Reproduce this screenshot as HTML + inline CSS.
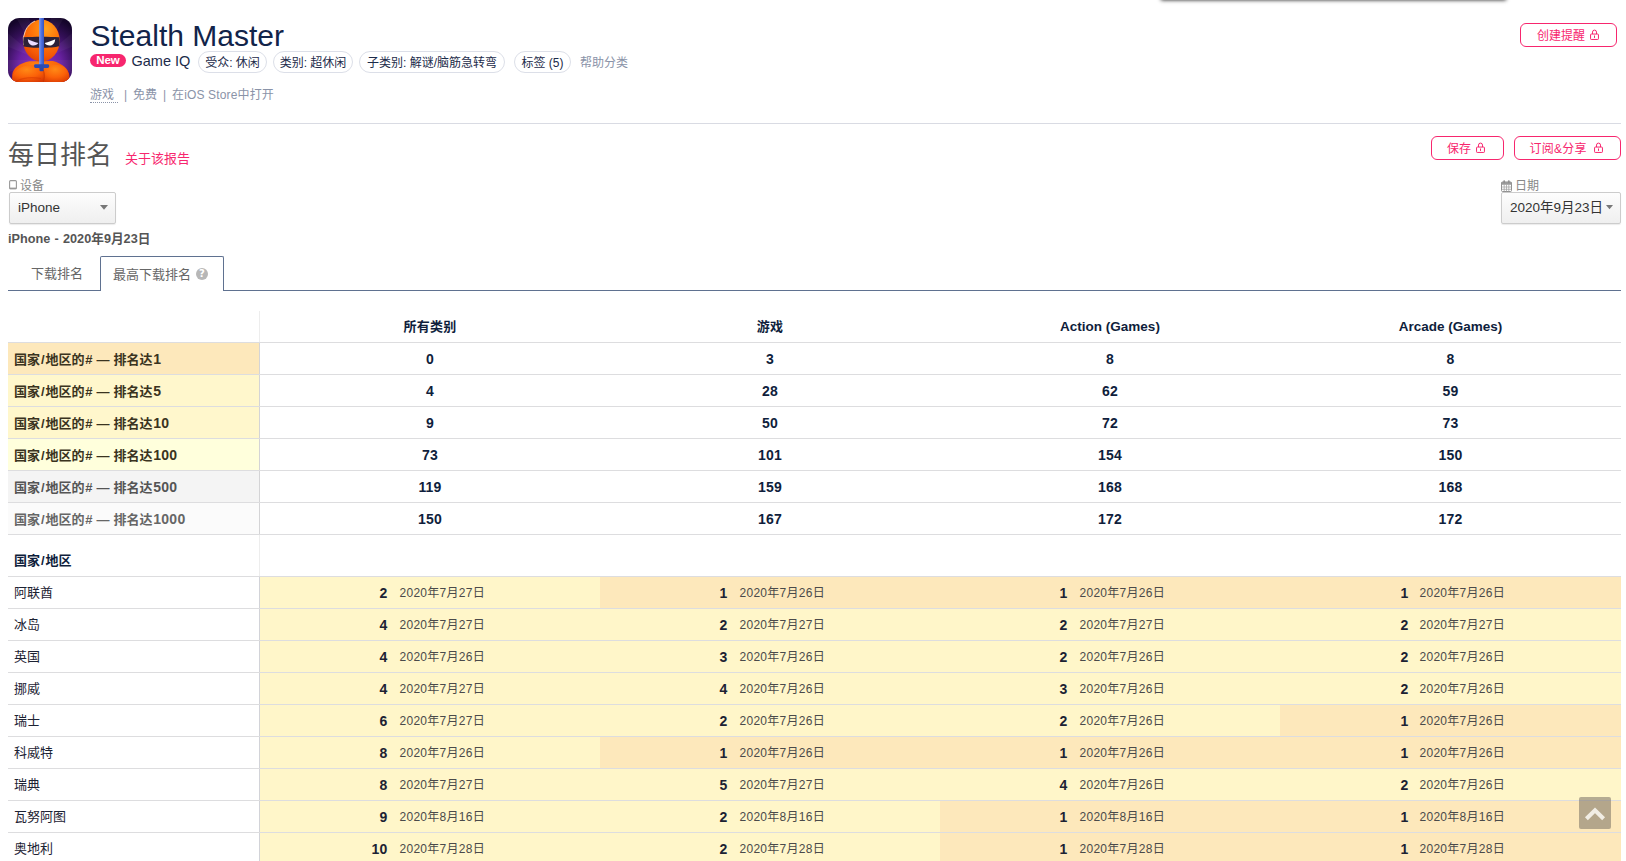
<!DOCTYPE html>
<html lang="zh-CN">
<head>
<meta charset="utf-8">
<title>Stealth Master - 每日排名</title>
<style>
*{box-sizing:border-box;margin:0;padding:0}
html,body{width:1626px;height:861px;overflow:hidden;background:#fff}
body{font-family:"Liberation Sans","Noto Sans CJK SC",sans-serif;font-size:12px;color:#0f1e3c;position:relative}
.abs{position:absolute;white-space:nowrap}
a{text-decoration:none;color:inherit}
/* header */
#topshadow{left:1160.5px;top:-20px;width:345px;height:20px;background:#fff;box-shadow:0 0 4px rgba(0,0,0,.9)}
#appicon{left:8px;top:18px;width:64px;height:64px}
#title{left:90.5px;top:15.5px;font-size:30px;line-height:40px;color:#12244a}
#newbadge{left:90px;top:54px;width:36px;height:13px;border-radius:7px;background:#f7266e;color:#fff;font-size:11.5px;line-height:13px;text-align:center;font-weight:bold}
#gameiq{left:131.5px;top:52px;font-size:14.5px;line-height:18px;color:#1c2b4a}
.pill{height:22px;top:51px;border:1px solid #dcdfe8;border-radius:11px;font-size:12px;line-height:22px;padding:0;text-align:center;color:#1c2b4a;background:#fff}
#helpcat{left:580px;top:52.5px;font-size:12px;line-height:20px;color:#8a93a8}
#sub{left:90px;top:85px;font-size:12px;line-height:20px;color:#8a93a8}
#sub span{position:absolute;top:0}
#sub .dot{border-bottom:1px dotted #8a93a8;height:18px}
.hr{left:8px;width:1613px;height:1px;top:123px;background:#d9dbe3}
.pbtn{height:24px;border:1px solid #f7266e;border-radius:6px;color:#f7266e;font-size:12px;line-height:22px;background:#fff}
.pbtn span{position:absolute;top:1px}
.pbtn svg{position:absolute;top:5px}
/* section */
#h2{left:8px;top:136px;font-size:26px;line-height:38px;color:#555}
#about{left:125px;top:150px;font-size:13px;line-height:18px;color:#f7266e}
.lbl{font-size:12px;line-height:14px;color:#888}
.sel{height:32px;border:1px solid #ccc;border-radius:2px;background:linear-gradient(#fdfdfd,#efefef);font-size:13.5px;line-height:30px;color:#333;box-shadow:0 1px 1px rgba(0,0,0,.08)}
.caret{position:absolute}
#devdate{left:8px;top:231px;font-size:12.7px;line-height:16px;font-weight:bold;color:#555;word-spacing:.7px}
#tabline{left:8px;top:290px;width:1613px;height:1px;background:#5f7190}
#tab1{left:31px;top:265px;font-size:13px;line-height:18px;color:#666}
#tab2{left:100px;top:256px;width:124px;height:35px;border:1px solid #5f7190;border-bottom:0;border-radius:2px 2px 0 0;background:#fff;font-size:13px;line-height:18px;color:#666;padding:8.5px 0 0 12px}
#qm{position:absolute;left:95px;top:11px;width:12px;height:12px;border-radius:6px;background:#b7b7b7;color:#fff;font-family:"DejaVu Sans","Liberation Sans",sans-serif;font-size:10px;line-height:12.5px;font-weight:bold;text-align:center}
/* table */
#tbl{left:8px;top:311px;width:1613px;font-size:13px}
.r{position:absolute;left:0;width:1613px;height:32px;border-top:1px solid #dddddf}
.r>div{position:absolute;top:0;height:31px;line-height:31px}
.c0{left:0;width:251px;padding-left:6px}
.c1{left:252px;width:340px}.c2{left:592px;width:340px}.c3{left:932px;width:340px}.c4{left:1272px;width:341px}
.vline{position:absolute;left:251px;width:1px}
.hd>div{line-height:32px;font-weight:bold;text-align:center;color:#0f1e3c;letter-spacing:.28px}.hd .lt{font-size:13.5px;letter-spacing:0}
.sm>div{line-height:32px;font-weight:bold;text-align:center;color:#0f1e3c;font-size:14px;letter-spacing:.2px}
.sm .c0{text-align:left;color:#3a3320;letter-spacing:0;padding-left:6px;font-size:13px}
.s1{background:#fde8bb}.s2{background:#fff7cc}.s3{background:#ffffdc}.s4{background:#f4f4f4}.s5{background:#fbfbfb}
.sm .s4{color:#555}.sm .s5{color:#666}
.ct .c0{color:#1c2233}
i{font-style:normal}.sl{margin:0 .9px 0 1px}.hs{margin:0 .5px 0 .6px}.ds{margin-right:.5px}.dg{font-size:14px;letter-spacing:.3px;margin-left:.5px}
.ct .n{position:absolute;right:212.5px;top:.6px;font-weight:bold;color:#1c2233;font-size:14px;letter-spacing:.2px}
.ct .d{position:absolute;left:139.5px;top:1px;color:#4a4a4a;font-size:12px;letter-spacing:.28px}
.y{background:#fff6c9}.o{background:#fde8bb}
#totop{left:1579px;top:797px;width:32px;height:32px;background:rgba(120,112,100,.55);border-radius:2px}
</style>
</head>
<body>
<div class="abs" id="topshadow"></div>
<svg class="abs" id="appicon" viewBox="0 0 64 64" width="64" height="64">
<defs>
<radialGradient id="bgG" cx="50%" cy="74%" r="78%"><stop offset="0" stop-color="#8e2fc0"/><stop offset=".42" stop-color="#6a21a3"/><stop offset=".72" stop-color="#351059"/><stop offset="1" stop-color="#14052a"/></radialGradient>
<radialGradient id="hdG" cx="62%" cy="22%" r="85%"><stop offset="0" stop-color="#ffa21f"/><stop offset=".35" stop-color="#ff7d0c"/><stop offset=".75" stop-color="#f65a05"/><stop offset="1" stop-color="#dd4003"/></radialGradient>
<radialGradient id="bdG" cx="45%" cy="20%" r="90%"><stop offset="0" stop-color="#ff8412"/><stop offset=".55" stop-color="#f95a06"/><stop offset="1" stop-color="#d53603"/></radialGradient>
<radialGradient id="armL" cx="45%" cy="25%" r="80%"><stop offset="0" stop-color="#ff8a16"/><stop offset=".55" stop-color="#fb6108"/><stop offset="1" stop-color="#d83803"/></radialGradient>
<linearGradient id="swG" x1="0" x2="1"><stop offset="0" stop-color="#7c9bf5"/><stop offset=".45" stop-color="#4f72e0"/><stop offset="1" stop-color="#3654bd"/></linearGradient>
<clipPath id="icClip"><rect width="64" height="64" rx="11.5" ry="11.5"/></clipPath>
</defs>
<g clip-path="url(#icClip)">
<rect width="64" height="64" fill="url(#bgG)"/>
<path d="M32 42 L-4 12 L-4 27 Z M32 42 L68 12 L68 27 Z M32 42 L6 -4 L20 -4 Z M32 42 L58 -4 L44 -4 Z M32 42 L-4 42 L-4 56 Z M32 42 L68 42 L68 56 Z" fill="#fff" opacity=".045"/>
<path d="M21.5 43.2 C12 45 4.6 50 4.2 57 L4.2 65 L61.4 65 L61.4 58 C61 51 54 45.5 45 43 Z" fill="url(#bdG)"/>
<ellipse cx="33.4" cy="22.6" rx="18.3" ry="21" fill="url(#hdG)"/>
<path d="M15.6 27 A18.3 21 0 0 1 27 3" fill="none" stroke="#fff1e0" stroke-width=".8" opacity=".95"/>
<path d="M15.6 19.3 C26 18.6 41 18.6 51.2 19.3 A18.3 21 0 0 1 51.3 28.2 C44 30.2 23 30.2 15.7 28.4 A18.3 21 0 0 1 15.6 19.3 Z" fill="#2d2238"/>
<path d="M19.8 21.2 C22.6 22.4 26.6 24 30.3 25 C29.4 27.2 26 28 23.4 27.2 C21.2 26.4 19.9 24 19.8 21.2 Z" fill="#eadcff"/>
<path d="M47.2 21.2 C44.4 22.4 40.4 24 36.7 25 C37.6 27.2 41 28 43.6 27.2 C45.8 26.4 47.1 24 47.2 21.2 Z" fill="#fff"/>
<path d="M4.6 64 C3.5 56 8 50.5 16 48.2 C24 46 33 47.5 35.2 52 C36.6 56 36 61 34.5 65 Z" fill="url(#armL)"/>
<path d="M35.4 52 C38 47.6 46 45.8 52.5 47.5 C58.5 49.3 62 54.5 61.2 65 L36 65 C37 60.5 37 56 35.4 52 Z" fill="url(#armL)"/>
<path d="M35.3 52 C36.8 56 36.6 61 35 65" fill="none" stroke="#b92c02" stroke-width=".9" opacity=".75"/>
<path d="M8 63.5 C14 60 24 59 33 60.5" fill="none" stroke="#d03402" stroke-width="1.2" opacity=".45"/>
<rect x="31.1" y="-1" width="4.9" height="49" fill="url(#swG)"/>
<rect x="31.5" y="49" width="4.2" height="4.2" rx="1.2" fill="#2c48a8"/>
<rect x="26.1" y="46.2" width="15" height="3.7" rx="1.4" fill="#2b4bb2"/>
</g>
</svg>
<div class="abs" id="title">Stealth Master</div>
<div class="abs" id="newbadge">New</div>
<div class="abs" id="gameiq">Game IQ</div>
<div class="abs pill" style="left:198px;width:69px">受众: 休闲</div>
<div class="abs pill" style="left:273px;width:80px">类别: 超休闲</div>
<div class="abs pill" style="left:359px;width:146px">子类别: 解谜/脑筋急转弯</div>
<div class="abs pill" style="left:514px;width:57px">标签 (5)</div>
<div class="abs" id="helpcat">帮助分类</div>
<div class="abs" id="sub"><span class="dot" style="left:0;width:28px">游戏</span><span style="left:34px">|</span><span style="left:43px">免费</span><span style="left:73px">|</span><span style="left:82px;letter-spacing:.15px">在iOS Store中打开</span></div>
<div class="abs pbtn" style="left:1520px;top:23px;width:97px"><span style="left:16px">创建提醒</span><svg style="left:69px" width="9" height="11" viewBox="0 0 9 11"><rect x=".55" y="5.05" width="7.9" height="5.4" rx=".7" fill="none" stroke="#f7266e" stroke-width="1"/><path d="M2.5 5V3.1a2 2 0 0 1 4 0V5" fill="none" stroke="#f7266e" stroke-width="1"/><rect x="4" y="6.5" width="1" height="2.4" fill="#f7266e"/></svg></div>
<div class="abs hr"></div>

<div class="abs" id="h2">每日排名</div>
<a class="abs" id="about">关于该报告</a>
<div class="abs pbtn" style="left:1431px;top:136px;width:73px"><span style="left:15px">保存</span><svg style="left:44px" width="9" height="11" viewBox="0 0 9 11"><rect x=".55" y="5.05" width="7.9" height="5.4" rx=".7" fill="none" stroke="#f7266e" stroke-width="1"/><path d="M2.5 5V3.1a2 2 0 0 1 4 0V5" fill="none" stroke="#f7266e" stroke-width="1"/><rect x="4" y="6.5" width="1" height="2.4" fill="#f7266e"/></svg></div>
<div class="abs pbtn" style="left:1514px;top:136px;width:107px"><span style="left:14.5px;letter-spacing:.25px">订阅&amp;分享</span><svg style="left:78.5px" width="9" height="11" viewBox="0 0 9 11"><rect x=".55" y="5.05" width="7.9" height="5.4" rx=".7" fill="none" stroke="#f7266e" stroke-width="1"/><path d="M2.5 5V3.1a2 2 0 0 1 4 0V5" fill="none" stroke="#f7266e" stroke-width="1"/><rect x="4" y="6.5" width="1" height="2.4" fill="#f7266e"/></svg></div>
<svg class="abs" style="left:9px;top:180px" width="8" height="10" viewBox="0 0 8 10"><rect x=".6" y=".6" width="6.8" height="8.2" rx="1" fill="none" stroke="#999" stroke-width="1.1"/><rect x=".6" y="7.6" width="6.8" height="1.6" fill="#999"/></svg><div class="abs lbl" style="left:20px;top:178.5px">设备</div>
<div class="abs sel" style="left:9px;top:192px;width:107px;padding-left:8px">iPhone<svg class="caret" style="left:90.4px;top:12.3px" width="8" height="5" viewBox="0 0 8 5"><path d="M0 0H8L4 4.8Z" fill="#777"/></svg></div>
<svg class="abs" style="left:1501px;top:180px" width="11" height="12" viewBox="0 0 11 12"><rect x=".5" y="2" width="10" height="9.5" rx="1" fill="#fff" stroke="#8f8f8f" stroke-width="1"/><path d="M.5 4.5H10.5M.5 7H10.5M.5 9.3H10.5M3.2 4.5V11.5M5.5 4.5V11.5M7.8 4.5V11.5" stroke="#a5a5a5" stroke-width=".8" fill="none"/><rect x=".5" y="2" width="10" height="2.2" fill="#9a9a9a"/><rect x="2.3" y=".3" width="1.8" height="3" rx=".8" fill="#8f8f8f"/><rect x="6.9" y=".3" width="1.8" height="3" rx=".8" fill="#8f8f8f"/></svg><div class="abs lbl" style="left:1515px;top:178.5px">日期</div>
<div class="abs sel" style="left:1501px;top:192px;width:120px;padding-left:8px">2020年9月23日<svg class="caret" style="left:104px;top:12.4px" width="7" height="5" viewBox="0 0 7 5"><path d="M0 0H7L3.5 4.3Z" fill="#777"/></svg></div>
<div class="abs" id="devdate">iPhone - 2020年9月23日</div>
<div class="abs" id="tabline"></div>
<div class="abs" id="tab1">下载排名</div>
<div class="abs" id="tab2">最高下载排名<span id="qm">?</span></div>

<div class="abs" id="tbl">
<div class="vline" style="top:0;height:31px;background:#ededed"></div><div class="vline" style="top:31px;height:192px;background:#d4d4d6"></div><div class="vline" style="top:223px;height:42px;background:#ededed"></div><div class="vline" style="top:265px;height:300px;background:#d2d3d8"></div>
<!--ROWS-->
<div class="r hd" style="top:0;border-top:0"><div class="c1">所有类别</div><div class="c2">游戏</div><div class="c3 lt">Action (Games)</div><div class="c4 lt">Arcade (Games)</div></div>
<div class="r sm" style="top:31px"><div class="c0 s1">国家<i class="sl">/</i>地区的<i class="hs">#</i> <i class="ds">—</i> 排名达<i class="dg">1</i></div><div class="c1">0</div><div class="c2">3</div><div class="c3">8</div><div class="c4">8</div></div>
<div class="r sm" style="top:63px"><div class="c0 s2">国家<i class="sl">/</i>地区的<i class="hs">#</i> <i class="ds">—</i> 排名达<i class="dg">5</i></div><div class="c1">4</div><div class="c2">28</div><div class="c3">62</div><div class="c4">59</div></div>
<div class="r sm" style="top:95px"><div class="c0 s2">国家<i class="sl">/</i>地区的<i class="hs">#</i> <i class="ds">—</i> 排名达<i class="dg">10</i></div><div class="c1">9</div><div class="c2">50</div><div class="c3">72</div><div class="c4">73</div></div>
<div class="r sm" style="top:127px"><div class="c0 s3">国家<i class="sl">/</i>地区的<i class="hs">#</i> <i class="ds">—</i> 排名达<i class="dg">100</i></div><div class="c1">73</div><div class="c2">101</div><div class="c3">154</div><div class="c4">150</div></div>
<div class="r sm" style="top:159px"><div class="c0 s4">国家<i class="sl">/</i>地区的<i class="hs">#</i> <i class="ds">—</i> 排名达<i class="dg">500</i></div><div class="c1">119</div><div class="c2">159</div><div class="c3">168</div><div class="c4">168</div></div>
<div class="r sm" style="top:191px"><div class="c0 s5">国家<i class="sl">/</i>地区的<i class="hs">#</i> <i class="ds">—</i> 排名达<i class="dg">1000</i></div><div class="c1">150</div><div class="c2">167</div><div class="c3">172</div><div class="c4">172</div></div>
<div class="r sm" style="top:223px;height:42px"><div class="c0" style="top:10px;color:#0f1e3c">国家<i class="sl">/</i>地区</div></div>
<div class="r ct" style="top:265px"><div class="c0">阿联酋</div><div class="c1 y"><span class="n">2</span><span class="d">2020年7月27日</span></div><div class="c2 o"><span class="n">1</span><span class="d">2020年7月26日</span></div><div class="c3 o"><span class="n">1</span><span class="d">2020年7月26日</span></div><div class="c4 o"><span class="n">1</span><span class="d">2020年7月26日</span></div></div>
<div class="r ct" style="top:297px"><div class="c0">冰岛</div><div class="c1 y"><span class="n">4</span><span class="d">2020年7月27日</span></div><div class="c2 y"><span class="n">2</span><span class="d">2020年7月27日</span></div><div class="c3 y"><span class="n">2</span><span class="d">2020年7月27日</span></div><div class="c4 y"><span class="n">2</span><span class="d">2020年7月27日</span></div></div>
<div class="r ct" style="top:329px"><div class="c0">英国</div><div class="c1 y"><span class="n">4</span><span class="d">2020年7月26日</span></div><div class="c2 y"><span class="n">3</span><span class="d">2020年7月26日</span></div><div class="c3 y"><span class="n">2</span><span class="d">2020年7月26日</span></div><div class="c4 y"><span class="n">2</span><span class="d">2020年7月26日</span></div></div>
<div class="r ct" style="top:361px"><div class="c0">挪威</div><div class="c1 y"><span class="n">4</span><span class="d">2020年7月27日</span></div><div class="c2 y"><span class="n">4</span><span class="d">2020年7月26日</span></div><div class="c3 y"><span class="n">3</span><span class="d">2020年7月26日</span></div><div class="c4 y"><span class="n">2</span><span class="d">2020年7月26日</span></div></div>
<div class="r ct" style="top:393px"><div class="c0">瑞士</div><div class="c1 y"><span class="n">6</span><span class="d">2020年7月27日</span></div><div class="c2 y"><span class="n">2</span><span class="d">2020年7月26日</span></div><div class="c3 y"><span class="n">2</span><span class="d">2020年7月26日</span></div><div class="c4 o"><span class="n">1</span><span class="d">2020年7月26日</span></div></div>
<div class="r ct" style="top:425px"><div class="c0">科威特</div><div class="c1 y"><span class="n">8</span><span class="d">2020年7月26日</span></div><div class="c2 o"><span class="n">1</span><span class="d">2020年7月26日</span></div><div class="c3 o"><span class="n">1</span><span class="d">2020年7月26日</span></div><div class="c4 o"><span class="n">1</span><span class="d">2020年7月26日</span></div></div>
<div class="r ct" style="top:457px"><div class="c0">瑞典</div><div class="c1 y"><span class="n">8</span><span class="d">2020年7月27日</span></div><div class="c2 y"><span class="n">5</span><span class="d">2020年7月27日</span></div><div class="c3 y"><span class="n">4</span><span class="d">2020年7月26日</span></div><div class="c4 y"><span class="n">2</span><span class="d">2020年7月26日</span></div></div>
<div class="r ct" style="top:489px"><div class="c0">瓦努阿图</div><div class="c1 y"><span class="n">9</span><span class="d">2020年8月16日</span></div><div class="c2 y"><span class="n">2</span><span class="d">2020年8月16日</span></div><div class="c3 o"><span class="n">1</span><span class="d">2020年8月16日</span></div><div class="c4 o"><span class="n">1</span><span class="d">2020年8月16日</span></div></div>
<div class="r ct" style="top:521px"><div class="c0">奥地利</div><div class="c1 y"><span class="n">10</span><span class="d">2020年7月28日</span></div><div class="c2 y"><span class="n">2</span><span class="d">2020年7月28日</span></div><div class="c3 o"><span class="n">1</span><span class="d">2020年7月28日</span></div><div class="c4 o"><span class="n">1</span><span class="d">2020年7月28日</span></div></div>
<!--/ROWS-->
</div>
<div class="abs" id="totop"><svg width="32" height="32" viewBox="0 0 32 32"><path d="M7.4 21.8L16 13.4L24.6 21.8" fill="none" stroke="#f1ede4" stroke-width="4.1"/></svg></div>
</body>
</html>
